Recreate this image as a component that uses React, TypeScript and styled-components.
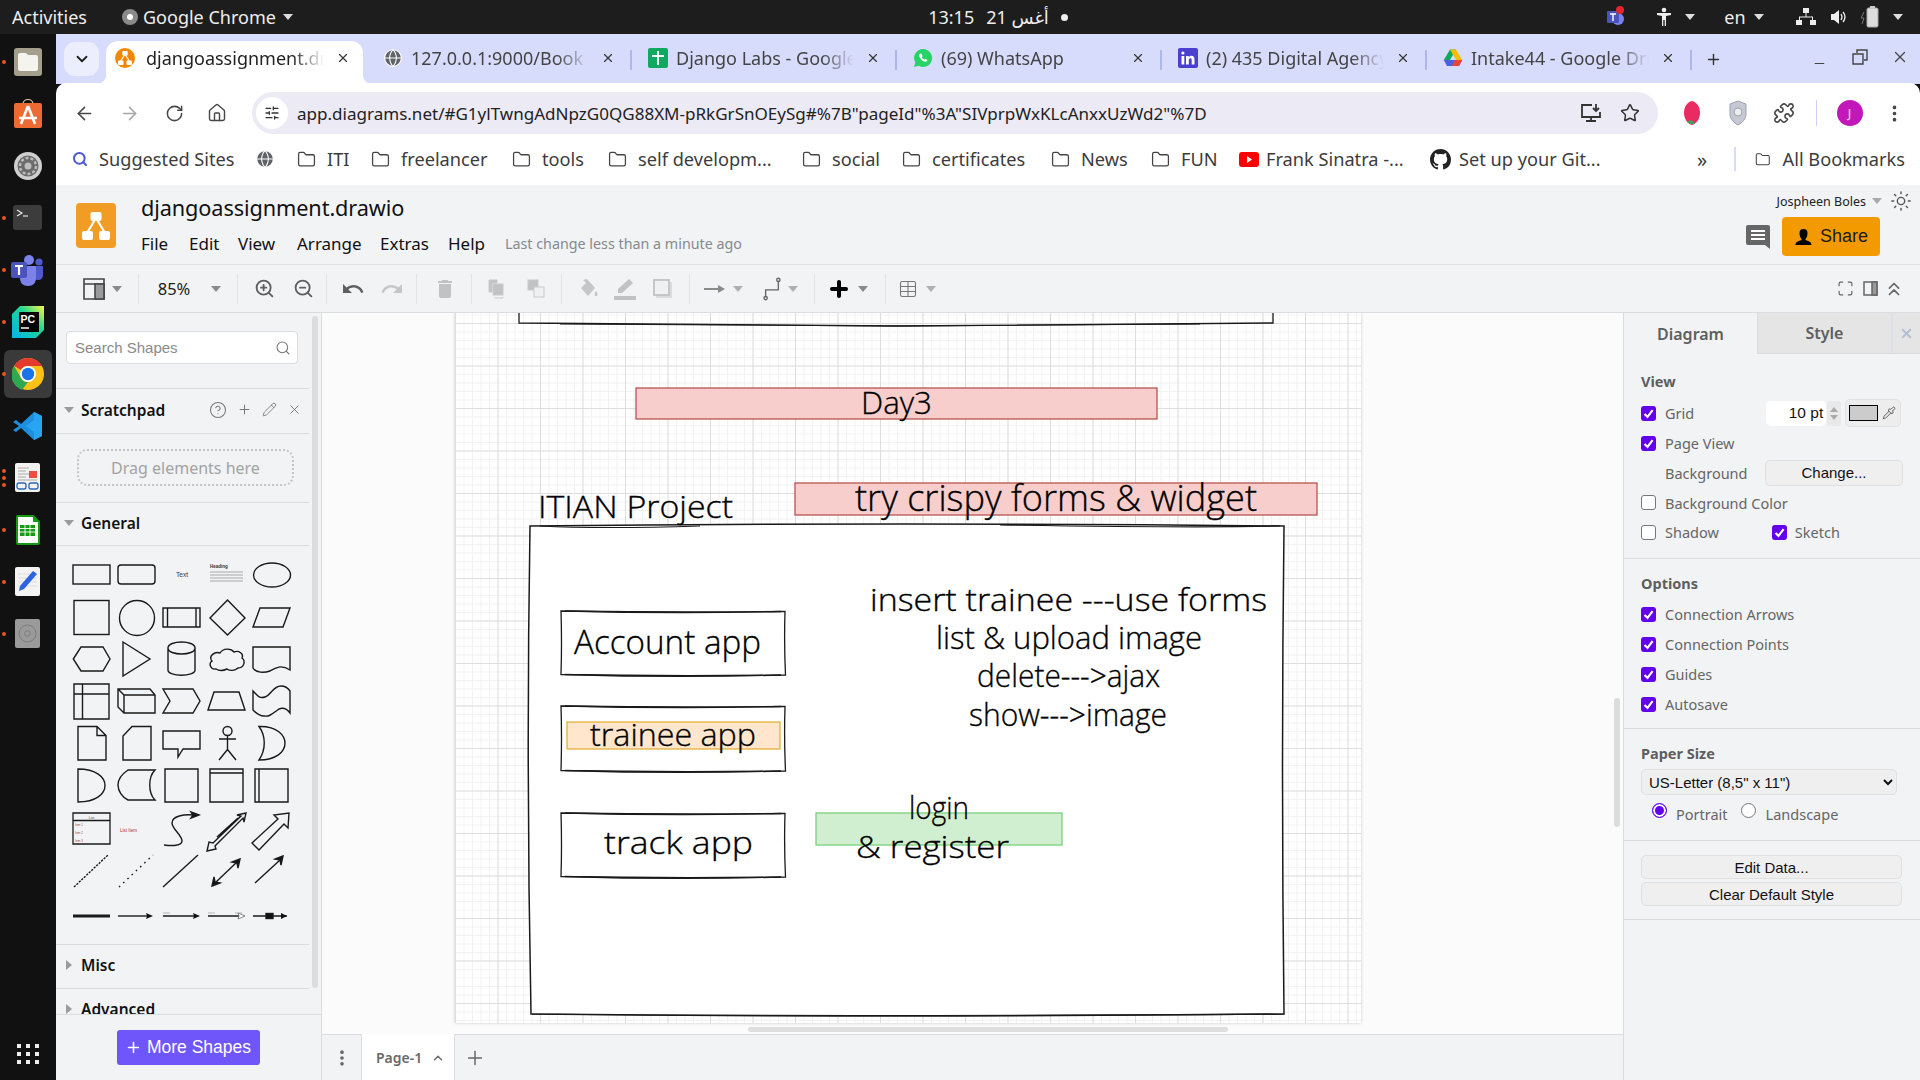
import React from "react";
import styled, { createGlobalStyle } from "styled-components";
import {
  ArrowLeft, ArrowRight, RotateCw, Home, ChevronDown, ChevronUp, Star, X, Plus, Minus, Search,
  Folder, MoreVertical, Pencil, Pipette, HelpCircle, ZoomIn, ZoomOut, Table, Sun,
  Maximize, ChevronsUp, SlidersHorizontal, Puzzle, Globe,
} from "lucide-react";

const UI = `"Noto Sans", "DejaVu Sans", sans-serif`;
const ARIAL = `"Liberation Sans", Arial, sans-serif`;

const Global = createGlobalStyle`
  html, body { margin: 0; padding: 0; background: #111; overflow: hidden; }
  * { box-sizing: border-box; }
  #root { width: 1920px; height: 1080px; }
`;

const Screen = styled.div`
  width: 1920px; height: 1080px; display: flex; flex-direction: column; overflow: hidden;
  font-family: ${UI}; color: #222;
`;

/* ---------- GNOME top bar ---------- */
const TopBar = styled.div`
  height: 34px; flex: none; background: #1d1d1d; color: #eee; display: grid;
  grid-template-columns: 1fr auto 1fr; align-items: center; font-size: 18px; padding: 0 12px;
`;
const TopLeft = styled.div`display: flex; align-items: center;`;
const TopCenter = styled.div`display: flex; align-items: center; gap: 12px; margin-left: 76px;`;
const TopRight = styled.div`display: flex; align-items: center; justify-content: flex-end;`;
const TopItem = styled.span<{ $w: number; $ml?: number }>`
  width: ${(p) => p.$w}px; margin-left: ${(p) => p.$ml ?? 0}px; flex: none; display: flex; align-items: center; justify-content: center;
`;
const TopLabel = styled.span<{ $ml: number }>`margin-left: ${(p) => p.$ml}px;`;
const Caret = styled.span<{ $c?: string; $s?: number; $ml?: number; $mr?: number; $up?: boolean }>`
  display: inline-block; width: 0; height: 0; flex: none;
  margin-left: ${(p) => p.$ml ?? 0}px; margin-right: ${(p) => p.$mr ?? 0}px;
  border-left: ${(p) => p.$s ?? 5}px solid transparent; border-right: ${(p) => p.$s ?? 5}px solid transparent;
  border-top: ${(p) => (p.$s ?? 5) + 1}px solid ${(p) => p.$c ?? "#ddd"};
  transform: ${(p) => (p.$up ? "rotate(180deg)" : "none")};
`;
const Dot = styled.span`width: 7px; height: 7px; border-radius: 50%; background: #eee; display: inline-block;`;

/* ---------- Dock ---------- */
const Body = styled.div`flex: 1; display: flex; min-height: 0;`;
const Dock = styled.div`
  width: 56px; flex: none; background: #111; display: flex; flex-direction: column; align-items: center;
  padding-top: 2px;
`;
const DockItem = styled.div<{ $active?: boolean }>`
  width: 48px; height: 48px; margin: 2px 0; border-radius: 6px; display: flex; align-items: center;
  justify-content: center; position: relative; background: ${(p) => (p.$active ? "#3a3a3a" : "transparent")};
`;
const DockDots = styled.div`
  position: absolute; left: -2px; top: 0; bottom: 0; display: flex; flex-direction: column; gap: 3px;
  justify-content: center; width: 4px;
`;
const DockDot = styled.span`width: 4px; height: 4px; border-radius: 50%; background: #e9541f; display: block;`;
const DockApps = styled.div`
  margin-top: auto; margin-bottom: 16px; display: grid; grid-template-columns: repeat(3, 4px); gap: 4px 5px;
`;
const AppsDot = styled.span`width: 4px; height: 4px; background: #eee; display: block;`;

/* ---------- Chrome ---------- */
const Main = styled.div`flex: 1; display: flex; flex-direction: column; min-width: 0;`;
const TabStrip = styled.div`
  height: 50px; flex: none; background: #d8dcfc; display: flex; align-items: flex-end; padding-left: 46px; position: relative;
`;
const TabSearch = styled.div`
  position: absolute; left: 8px; top: 8px; width: 35px; height: 34px; border-radius: 11px; background: #eceefd;
  display: flex; align-items: center; justify-content: center; color: #1f1f1f;
`;
const Tab = styled.div<{ $active?: boolean; $sep?: boolean }>`
  width: ${(p) => (p.$active ? 257 : 265)}px; margin: ${(p) => (p.$active ? "0 4px" : "0")};
  height: 43px; flex: none; display: flex; align-items: center; padding: 0 0 9px ${(p) => (p.$active ? 9 : 16)}px; position: relative;
  font-size: 18px; color: ${(p) => (p.$active ? "#222" : "#444")};
  background: ${(p) => (p.$active ? "#fff" : "transparent")};
  border-radius: ${(p) => (p.$active ? "12px 12px 0 0" : "0")};
  ${(p) =>
    p.$sep
      ? `&::after { content: ""; position: absolute; right: 0; top: 9px; height: 20px; width: 2px; background: #aeb6ef; }`
      : ""}
  ${(p) =>
    p.$active
      ? `&::before { content: ""; position: absolute; left: -10px; bottom: 0; width: 10px; height: 10px; background: radial-gradient(circle at 0 0, transparent 10px, #fff 10.5px); }
         &::after { content: ""; position: absolute; right: -10px; bottom: 0; width: 10px; height: 10px; background: radial-gradient(circle at 100% 0, transparent 10px, #fff 10.5px); }`
      : ""}
`;
const TabIcon = styled.span<{ $active?: boolean }>`width: 20px; height: 20px; flex: none; display: flex; margin-right: ${(p) => (p.$active ? 11 : 8)}px;`;
const TabTitle = styled.span`
  width: 178px; flex: none; white-space: nowrap; overflow: hidden;
  -webkit-mask-image: linear-gradient(90deg, #000 82%, transparent 100%);
  mask-image: linear-gradient(90deg, #000 82%, transparent 100%);
`;
const TabClose = styled.span`margin-left: 12px; display: flex; color: #333;`;
const NewTab = styled.span`margin: 0 0 16px 13px; display: flex; color: #333;`;
const WinBtns = styled.div`margin-left: auto; display: flex; align-items: center; gap: 23px; padding: 0 11px 13px 0; color: #444;`;
const WinMinus = styled(Minus)`margin: 14px 2px 0 0;`;

const NavBar = styled.div`
  height: 58px; flex: none; background: #fff; display: flex; align-items: flex-start; padding: 9px 0 0 0; position: relative;
  margin-top: -1px; border-radius: 10px 10px 0 0;
`;
const NavBtn = styled.span<{ $w: number; $c?: string; $ml?: number }>`
  width: ${(p) => p.$w}px; margin-left: ${(p) => p.$ml ?? 0}px; height: 42px; flex: none; display: flex; align-items: center; justify-content: center;
  color: ${(p) => p.$c ?? "#474747"};
`;
const Omnibox = styled.div`
  width: 1406px; height: 42px; flex: none; margin-left: 20px; background: #eceaf5; border-radius: 21px; display: flex; align-items: center; padding-left: 4px;
`;
const TuneCircle = styled.span`
  width: 32px; height: 32px; border-radius: 50%; background: #fff; display: flex; align-items: center; justify-content: center; color: #333; flex: none;
`;
const Url = styled.span`margin-left: 9px; font-size: 17.05px; color: #222; white-space: nowrap; flex: 1;`;
const OmniIcon = styled.span<{ $w: number }>`width: ${(p) => p.$w}px; flex: none; display: flex; justify-content: center; color: #333;`;
const NavSep = styled.span`width: 1px; height: 26px; margin: 8px 0 0 15px; background: #ccd0f4; flex: none;`;
const Avatar = styled.span`
  width: 26px; height: 26px; border-radius: 50%; background: #c217b9; color: #f3d0f0; display: flex; align-items: center;
  justify-content: center; font-size: 12px; font-weight: 500;
`;

const Bookmarks = styled.div`
  height: 44px; flex: none; background: #fff; display: flex; align-items: flex-start; padding: 4px 0 0 16px; font-size: 18.2px; color: #444;
`;
const Mark = styled.div<{ $w: number; $gap?: number }>`
  width: ${(p) => p.$w}px; flex: none; height: 28px; display: flex; align-items: center; gap: ${(p) => p.$gap ?? 11}px; white-space: nowrap; color: #3c3c3c;
`;
const Chevrons = styled.span`font-size: 20px;`;
const MarkSep = styled.span`width: 2px; height: 24px; background: #d8dcfc; margin: 2px 19px 0 17px; flex: none;`;

/* ---------- draw.io header ---------- */
const AppHead = styled.div`
  height: 80px; flex: none; background: #f1f3f5; border-bottom: 1px solid #dfe1e4; display: flex; padding: 18px 0 0 20px;
`;
const LogoBox = styled.span`width: 40px; height: 45px; background: #f19c25; border-radius: 4px; display: flex; align-items: center; justify-content: center; flex: none;`;
const TitleCol = styled.div`margin-left: 25px; display: flex; flex-direction: column; margin-top: -10px;`;
const DocTitle = styled.div`font-size: 21.7px; line-height: 30px; color: #111; letter-spacing: -0.1px;`;
const MenuRow = styled.div`display: flex; align-items: center; height: 30px; margin-top: 5px; font-size: 17px; color: #111;`;
const MenuItem = styled.span<{ $w: number }>`width: ${(p) => p.$w}px; flex: none;`;
const Status = styled.span`font-size: 14.3px; color: #868a8e; white-space: nowrap;`;
const HeadRight = styled.div`margin-left: auto; display: flex; flex-direction: column; align-items: flex-end; padding-right: 8px; margin-top: -18px;`;
const UserRow = styled.div`display: flex; align-items: center; gap: 6px; font-size: 12.5px; color: #222; height: 32px;`;
const UserSun = styled(Sun)`margin-left: 2px;`;
const ShareRow = styled.div`display: flex; align-items: center; gap: 11px; padding-right: 32px;`;
const ShareBtn = styled.div`
  width: 98px; height: 39px; background: #f39a00; border-radius: 4px; display: flex; align-items: center; justify-content: center; gap: 7px;
  font-family: ${ARIAL}; font-size: 18px; color: #1a1a1a;
`;

const ToolBar = styled.div`
  height: 48px; flex: none; background: #f1f3f5; border-bottom: 1px solid #dadce0; display: flex; align-items: center; padding-left: 22px;
`;
const Tool = styled.span<{ $w: number; $ml?: number; $c?: string }>`
  width: ${(p) => p.$w}px; margin-left: ${(p) => p.$ml ?? 0}px; height: 32px; flex: none; display: flex; align-items: center; justify-content: center;
  color: ${(p) => p.$c ?? "#5f5f5f"}; font-size: 16.5px;
`;
const ToolSep = styled.span<{ $ml?: number }>`width: 1px; height: 30px; background: #e1e3e6; margin-left: ${(p) => p.$ml ?? 0}px; flex: none;`;
const ToolRight = styled.div`margin-left: auto; display: flex; align-items: center; gap: 9px; padding-right: 15px; color: #666;`;
const Collapse = styled(ChevronsUp)`margin-left: -4px;`;

/* ---------- workspace ---------- */
const Work = styled.div`flex: 1; display: flex; min-height: 0;`;
const Sidebar = styled.div`
  width: 266px; flex: none; background: #f1f3f5; border-right: 1px solid #dadce0; display: flex; flex-direction: column; position: relative;
`;
const SideScroll = styled.div`flex: 1; min-height: 0; overflow: hidden; padding-right: 12px;`;
const SearchBox = styled.div`
  margin: 18px 0 24px 10px; width: 232px; height: 33px; background: #fff; border: 1px solid #dcdcdc; border-radius: 4px; display: flex; align-items: center;
  padding: 0 6px 0 8px; justify-content: space-between; color: #8a8a8a; font-family: ${ARIAL}; font-size: 15px;
`;
const Section = styled.div<{ $h: number }>`
  height: ${(p) => p.$h}px; border-top: 1px solid #dadce0; display: flex; align-items: center; padding: 0 0 3px 8px; gap: 4px;
  font-size: 15.5px; font-weight: 600; color: #111;
`;
const Tri = styled.span<{ $open?: boolean }>`
  width: 0; height: 0; flex: none; margin-right: 3px;
  ${(p) =>
    p.$open
      ? `border-left: 5px solid transparent; border-right: 5px solid transparent; border-top: 6px solid #9b9b9b;`
      : `border-top: 5px solid transparent; border-bottom: 5px solid transparent; border-left: 6px solid #9b9b9b; margin-left: 2px; margin-right: 5px;`}
`;
const SecIcons = styled.span`margin-left: auto; display: flex; align-items: center; gap: 10px; color: #777; padding-right: 7px;`;
const DragWrap = styled.div`border-top: 1px solid #dadce0; height: 69px; padding: 15px 0 0 21px;`;
const DragBox = styled.div`
  width: 217px; height: 37px; border: 2px dotted #c4c4c4; border-radius: 10px; display: flex; align-items: center; justify-content: center;
  color: #a3a3a3; font-size: 16px;
`;
const Palette = styled.div`
  border-top: 1px solid #dadce0; height: 399px; padding: 8px 0 0 14px; display: grid; grid-template-columns: repeat(5, 45px); grid-auto-rows: 42.6px;
`;
const ShapeSvg = styled.svg.attrs({ viewBox: "0 0 45 42", width: 45, height: 42 })`
  fill: none; stroke: #1a1a1a; stroke-width: 1.4; display: block;
  text { stroke: none; font-family: ${ARIAL}; }
`;
const More = styled.div`
  height: 66px; flex: none; border-top: 1px solid #dadce0; display: flex; justify-content: center; padding: 15px 0 0 0; background: #f1f3f5;
`;
const MoreBtn = styled.div`
  width: 143px; height: 35px; background: #6e56fb; border-radius: 3px; color: #fff; font-family: ${ARIAL}; font-size: 17.5px;
  display: flex; align-items: center; justify-content: center; gap: 5px; margin-right: 1px;
`;
const VScroll = styled.span<{ $x: number; $y: number; $h: number }>`
  position: absolute; left: ${(p) => p.$x}px; top: ${(p) => p.$y}px; width: 6px; height: ${(p) => p.$h}px; border-radius: 3px; background: #dcdcdc;
`;

const Center = styled.div`flex: 1; display: flex; flex-direction: column; min-width: 0; position: relative;`;
const Canvas = styled.div`height: 721px; flex: none; background: #fbfbfb; padding-left: 133px; overflow: hidden; position: relative;`;
const Sheet = styled.div`
  width: 906px; height: 710px; box-shadow: 0 0 3px #c9c9c9; background-color: #fff;
  background-image:
    linear-gradient(#dedede 1px, transparent 1px), linear-gradient(90deg, #dedede 1px, transparent 1px),
    linear-gradient(#f2f2f2 1px, transparent 1px), linear-gradient(90deg, #f2f2f2 1px, transparent 1px);
  background-size: 42.5px 42.5px, 42.5px 42.5px, 8.5px 8.5px, 8.5px 8.5px;
  background-position: 0 10px, 0 0, 0 1.5px, 0 0;
`;
const DiagramSvg = styled.svg.attrs({ viewBox: "455 313 906 710", width: 906, height: 710 })`
  display: block; fill: none; stroke: #1a1a1a; stroke-width: 1.3;
`;
const HandText = styled.text<{ $s: number }>`
  font-family: "Open Sans", "Noto Sans", sans-serif; font-weight: 300; fill: #000; stroke: #000; stroke-width: 0.35; font-size: ${(p) => p.$s}px;
`;
const HScroll = styled.span`position: absolute; left: 426px; bottom: 2px; width: 480px; height: 5px; border-radius: 3px; background: #dedede;`;
const Footer = styled.div`
  flex: 1; background: #f1f3f5; border-top: 1px solid #dadce0; display: flex; align-items: stretch;
`;
const FootBtn = styled.span<{ $w: number }>`width: ${(p) => p.$w}px; flex: none; display: flex; align-items: center; justify-content: center; color: #666;`;
const PageTab = styled.div`
  width: 94px; flex: none; background: #fff; border-left: 1px solid #dadce0; border-right: 1px solid #dadce0; display: flex; align-items: center; gap: 9px;
  padding-left: 14px; font-size: 14px; font-weight: 600; color: #6a6a6a; margin-top: -1px; height: 47px;
`;

/* ---------- format panel ---------- */
const Format = styled.div`
  width: 297px; flex: none; background: #f1f3f5; border-left: 1px solid #dadce0; display: flex; flex-direction: column; color: #666; font-size: 14.5px;
`;
const FormatTabs = styled.div`display: flex; height: 41px; flex: none;`;
const FormatTab = styled.div<{ $on?: boolean }>`
  width: ${(p) => (p.$on ? 133 : 134)}px; display: flex; align-items: center; justify-content: center; font-weight: 600; font-size: 16px; color: #5e5e5e;
  background: ${(p) => (p.$on ? "#f1f3f5" : "#e5e5e5")}; border-left: ${(p) => (p.$on ? "0" : "1px solid #dadce0")}; border-bottom: ${(p) => (p.$on ? "0" : "1px solid #dadce0")};
`;
const FormatClose = styled.div`flex: 1; background: #e5e5e5; border-left: 2px solid #dde0e6; border-bottom: 1px solid #dadce0; display: flex; align-items: center; justify-content: center; color: #b4bfd1;`;
const FormatSec = styled.div<{ $h: number; $pt?: number }>`
  height: ${(p) => p.$h}px; flex: none; padding: ${(p) => p.$pt ?? 0}px 17px 0 17px; border-bottom: 1px solid #dadce0;
`;
const SecTitle = styled.div<{ $mb?: number }>`font-weight: 700; font-size: 14.5px; color: #5e5e5e; height: 24px; line-height: 24px; margin-bottom: ${(p) => p.$mb ?? 0}px;`;
const Row = styled.div<{ $h?: number; $pl?: number }>`display: flex; align-items: center; height: ${(p) => p.$h ?? 30}px; padding-left: ${(p) => p.$pl ?? 0}px;`;
const ViewRow = styled(Row)`height: 29.75px;`;
const Check = styled.span<{ $on?: boolean; $ml?: number }>`
  width: 15px; height: 15px; border-radius: 3px; flex: none; display: flex; align-items: center; justify-content: center; margin-left: ${(p) => p.$ml ?? 0}px;
  background: ${(p) => (p.$on ? "#6200ee" : "#fff")}; border: ${(p) => (p.$on ? "none" : "1px solid #777")};
`;
const Label = styled.span<{ $ml?: number; $mt?: number }>`margin-left: ${(p) => p.$ml ?? 9}px; margin-top: ${(p) => p.$mt ?? 0}px; white-space: nowrap; color: #666;`;
const PtInput = styled.div`
  width: 60px; height: 25px; background: #fff; border-radius: 5px; margin-left: 72px; display: flex; align-items: center; justify-content: flex-end; padding-right: 3px;
  font-family: ${ARIAL}; font-size: 15.5px; color: #111;
`;
const Stepper = styled.div`width: 14px; height: 25px; margin-left: 1px; background: #e9e9e9; border-radius: 3px; display: flex; flex-direction: column; align-items: center; justify-content: center; gap: 3px;`;
const ColorBtn = styled.div`width: 56px; height: 28px; background: #ededed; border: 1px solid #e2e2e2; border-radius: 5px; margin-left: 4px; display: flex; align-items: center; padding-left: 3px; gap: 4px; color: #555;`;
const Swatch = styled.span`width: 29px; height: 16px; background: #cccccc; border: 1px solid #000; flex: none;`;
const NativeBtn = styled.div<{ $w: number; $h: number; $mt?: number }>`
  width: ${(p) => p.$w}px; height: ${(p) => p.$h}px; margin-top: ${(p) => p.$mt ?? 0}px; background: #efefef; border: 1px solid #e0e0e0; border-radius: 5px; display: flex; align-items: center;
  justify-content: center; font-family: ${ARIAL}; font-size: 15px; color: #111; flex: none;
`;
const ChangeBtn = styled(NativeBtn)`margin-left: auto;`;
const PaperSelect = styled.select`
  width: 256px; height: 26px; background: #efefef; border: 1px solid #e0e0e0; border-radius: 5px; font-family: ${ARIAL}; font-size: 15px; color: #111; padding-left: 3px; display: block; margin-top: 4px;
`;
const Radio = styled.span<{ $on?: boolean; $ml?: number }>`
  width: 15px; height: 15px; border-radius: 50%; flex: none; background: #fff; margin-left: ${(p) => p.$ml ?? 0}px; margin-top: -3px;
  border: 1px solid ${(p) => (p.$on ? "#6200ee" : "#777")};
  ${(p) => (p.$on ? "box-shadow: inset 0 0 0 2px #fff; background: #6200ee;" : "")}
`;

/* ---------- small drawings ---------- */
const Tick = () => (
  <svg width="11" height="11" viewBox="0 0 11 11" fill="none" stroke="#fff" strokeWidth="2.2"><path d="M1.5 6 L4.5 8.8 L9.6 2.2" /></svg>
);

const FolderIcon = () => <Folder size={19} strokeWidth={1.6} color="#444" />;

const DrawioGlyph = ({ s, bg }: { s: number; bg?: string }) => (
  <svg width={s} height={s} viewBox="0 0 40 40">
    {bg && <circle cx="20" cy="20" r="20" fill={bg} />}
    <path d="M20 12 L11 27 M20 12 L29 27" stroke="#fff" strokeWidth="2.2" />
    <rect x="14.5" y="6" width="11" height="9" rx="2" fill="#fff" />
    <rect x="6" y="25" width="11" height="9" rx="2" fill="#fff" />
    <rect x="23" y="25" width="11" height="9" rx="2" fill="#fff" />
  </svg>
);

const SheetsFav = () => (
  <svg width="20" height="20" viewBox="0 0 20 20"><rect width="20" height="20" rx="2" fill="#0fa960" /><path d="M10 3v14M4 8h12" stroke="#fff" strokeWidth="2" /></svg>
);
const WhatsFav = () => (
  <svg width="20" height="20" viewBox="0 0 20 20">
    <path d="M10 1a9 9 0 0 0-7.7 13.5L1 19l4.6-1.2A9 9 0 1 0 10 1z" fill="#25d366" />
    <path d="M6.8 5.6c-.9.9-1 2.6.6 4.8 1.6 2.2 3.7 3.6 5.4 3.3 1-.2 1.6-1 1.6-1.7l-2-1.2-.9.9c-1-.4-2.2-1.6-2.7-2.8l.8-.9-1-2.2z" fill="#fff" />
  </svg>
);
const LinkedInFav = () => (
  <svg width="20" height="20" viewBox="0 0 20 20">
    <rect width="20" height="20" rx="2" fill="#4b3fd0" />
    <rect x="3.5" y="8" width="2.8" height="8.5" fill="#fff" /><circle cx="4.9" cy="5" r="1.6" fill="#fff" />
    <path d="M8 8h2.7v1.3c.5-.9 1.5-1.5 2.7-1.5 2.2 0 3.1 1.4 3.1 3.6v5.1h-2.8v-4.6c0-1.1-.4-1.7-1.3-1.7s-1.6.7-1.6 1.8v4.5H8z" fill="#fff" />
  </svg>
);
const DriveFav = () => (
  <svg width="20" height="20" viewBox="0 0 20 20">
    <path d="M7 1.5h6L7 12H.8z" fill="#0fa960" />
    <path d="M13 1.5 19.2 12H13L7 1.5z" fill="#fbbc04" />
    <path d="M.8 12H19.2L16 18H4z" fill="#4c5fe0" />
    <path d="M12 12h7.2L16 18H9z" fill="#ea4335" />
  </svg>
);

const YouTubeIcon = () => (
  <svg width="20" height="15" viewBox="0 0 20 15"><rect width="20" height="15" rx="3" fill="#f00" /><path d="M8 4l5 3.5L8 11z" fill="#fff" /></svg>
);
const GithubIcon = () => (
  <svg width="21" height="21" viewBox="0 0 16 16" fill="#222">
    <path d="M8 0C3.58 0 0 3.58 0 8c0 3.54 2.29 6.53 5.47 7.59.4.07.55-.17.55-.38 0-.19-.01-.82-.01-1.49-2.01.37-2.53-.49-2.69-.94-.09-.23-.48-.94-.82-1.13-.28-.15-.68-.52-.01-.53.63-.01 1.08.58 1.23.82.72 1.21 1.87.87 2.33.66.07-.52.28-.87.51-1.07-1.78-.2-3.64-.89-3.64-3.95 0-.87.31-1.59.82-2.15-.08-.2-.36-1.02.08-2.12 0 0 .67-.21 2.2.82.64-.18 1.32-.27 2-.27s1.36.09 2 .27c1.53-1.04 2.2-.82 2.2-.82.44 1.1.16 1.92.08 2.12.51.56.82 1.27.82 2.15 0 3.07-1.87 3.75-3.65 3.95.29.25.54.73.54 1.48 0 1.07-.01 1.93-.01 2.2 0 .21.15.46.55.38A8 8 0 0 0 16 8c0-4.42-3.58-8-8-8z" />
  </svg>
);

const tabs = [
  { title: "djangoassignment.drawio", icon: <DrawioGlyph s={20} bg="#f08705" />, active: true },
  { title: "127.0.0.1:9000/Book", icon: <Globe size={20} color="#fff" fill="#5f6368" strokeWidth={1.3} /> },
  { title: "Django Labs - Google Sheets", icon: <SheetsFav /> },
  { title: "(69) WhatsApp", icon: <WhatsFav /> },
  { title: "(2) 435 Digital Agency", icon: <LinkedInFav /> },
  { title: "Intake44 - Google Drive", icon: <DriveFav /> },
];

const marks: { label: string; w: number; icon?: React.ReactNode; gap?: number }[] = [
  { label: "Suggested Sites", w: 183, icon: <Search size={16} strokeWidth={3} color="#4a5ad0" /> },
  { label: "", w: 42, icon: <Globe size={20} color="#fff" fill="#5f6368" strokeWidth={1.3} /> },
  { label: "ITI", w: 74 },
  { label: "freelancer", w: 141 },
  { label: "tools", w: 96 },
  { label: "self developm...", w: 194 },
  { label: "social", w: 100 },
  { label: "certificates", w: 149 },
  { label: "News", w: 100 },
  { label: "FUN", w: 88 },
  { label: "Frank Sinatra -...", w: 191, icon: <YouTubeIcon />, gap: 7 },
  { label: "Set up your Git...", w: 267, icon: <GithubIcon />, gap: 8 },
];

const dock: { key: string; dots: number; active?: boolean; icon: React.ReactNode }[] = [
  {
    key: "files", dots: 1,
    icon: (
      <svg width="30" height="30" viewBox="0 0 30 30">
        <rect x="1" y="1" width="28" height="28" rx="3" fill="#a49e8c" />
        <path d="M5 8a2 2 0 0 1 2-2h6l2 2h8a2 2 0 0 1 2 2v12a2 2 0 0 1-2 2H7a2 2 0 0 1-2-2z" fill="#f5f3ee" />
      </svg>
    ),
  },
  {
    key: "store", dots: 0,
    icon: (
      <svg width="30" height="32" viewBox="0 0 30 32">
        <path d="M10 6c0-6 10-6 10 0" fill="none" stroke="#e6c9a8" strokeWidth="1.2" />
        <rect x="1" y="5" width="28" height="25" rx="2" fill="#ee6a33" />
        <path d="M15 8 L8 26 M15 8 L22 26 M6 20h18" stroke="#fff" strokeWidth="2.6" fill="none" />
      </svg>
    ),
  },
  {
    key: "settings", dots: 0,
    icon: (
      <svg width="30" height="30" viewBox="0 0 30 30" fill="none">
        <circle cx="15" cy="15" r="14" fill="#cfcfcf" />
        <circle cx="15" cy="15" r="10.5" fill="#6b6b6b" />
        <circle cx="15" cy="15" r="8" stroke="#bdbdbd" strokeWidth="2.4" strokeDasharray="3 2" />
        <circle cx="15" cy="15" r="3.5" fill="#bdbdbd" />
      </svg>
    ),
  },
  {
    key: "term", dots: 1,
    icon: (
      <svg width="30" height="26" viewBox="0 0 30 26">
        <rect width="29" height="25" rx="3" fill="#3c3c3c" />
        <path d="M4 5l5 3-5 3" stroke="#eee" fill="none" strokeWidth="1.1" /><path d="M10 11h5" stroke="#eee" strokeWidth="1.1" />
      </svg>
    ),
  },
  {
    key: "teams", dots: 1,
    icon: (
      <svg width="34" height="32" viewBox="0 0 34 32">
        <circle cx="18" cy="6" r="5" fill="#7b83eb" /><circle cx="28" cy="8" r="3.6" fill="#5059c9" />
        <path d="M22 12h10v9c0 3-2 5-5 5s-5-2-5-5z" fill="#5059c9" />
        <path d="M9 12h16v12c0 5-3 8-8 8s-8-3-8-8z" fill="#7b83eb" />
        <rect x="0" y="8" width="16" height="16" rx="2" fill="#4b53bc" />
        <path d="M4 12h8M8 12v9" stroke="#fff" strokeWidth="2.2" />
      </svg>
    ),
  },
  {
    key: "pycharm", dots: 1,
    icon: (
      <svg width="32" height="32" viewBox="0 0 32 32">
        <defs>
          <linearGradient id="pc" x1="0" y1="1" x2="1" y2="0"><stop offset="0" stopColor="#00b4f0" /><stop offset=".6" stopColor="#20d790" /><stop offset="1" stopColor="#fcf84a" /></linearGradient>
        </defs>
        <path d="M8 0h24v24l-8 8H0V8z" fill="url(#pc)" />
        <rect x="7" y="6" width="20" height="20" fill="#000" />
        <path d="M9 22h8" stroke="#fff" strokeWidth="1.5" />
        <text x="8.5" y="17" fill="#fff" fontSize="10.5" fontWeight="700" fontFamily="Liberation Sans">PC</text>
      </svg>
    ),
  },
  {
    key: "chrome", dots: 1, active: true,
    icon: (
      <svg width="32" height="32" viewBox="0 0 32 32">
        <circle cx="16" cy="16" r="16" fill="#fbc116" />
        <path d="M16 0a16 16 0 0 1 13.9 8H16a8 8 0 0 0-7 4L2.1 8A16 16 0 0 1 16 0z" fill="#e33b2e" />
        <path d="M2.1 8 9 20a8 8 0 0 0 7 4l-6 8A16 16 0 0 1 2.1 8z" fill="#2fa84f" />
        <circle cx="16" cy="16" r="8" fill="#fff" /><circle cx="16" cy="16" r="6.2" fill="#1a73e8" />
      </svg>
    ),
  },
  {
    key: "code", dots: 0,
    icon: (
      <svg width="30" height="30" viewBox="0 0 30 30">
        <path d="M21 1 29 5v20l-8 4L8 17 3 21 0 19l6-4-6-4 3-2 5 4z" fill="#1c8fe0" />
        <path d="M21 1 29 5v20l-8 4V21l-8-6 8-6z" fill="#27a5f0" />
      </svg>
    ),
  },
  {
    key: "reader", dots: 3,
    icon: (
      <svg width="26" height="30" viewBox="0 0 26 30" fill="none">
        <rect width="25" height="29" rx="2" fill="#f2f2f0" />
        <path d="M3 5h11M3 8h8M3 11h11M3 14h8M3 17h19" stroke="#aaa" />
        <rect x="14" y="8" width="8" height="7" fill="#ef4a45" />
        <rect x="2" y="20" width="9" height="6" rx="2" stroke="#2a66b8" strokeWidth="1.3" /><rect x="14" y="20" width="9" height="6" rx="2" stroke="#2a66b8" strokeWidth="1.3" />
      </svg>
    ),
  },
  {
    key: "calc", dots: 1,
    icon: (
      <svg width="24" height="30" viewBox="0 0 24 30">
        <path d="M2 1h15l6 6v21a1 1 0 0 1-1 1H2a1 1 0 0 1-1-1V2a1 1 0 0 1 1-1z" fill="#fff" stroke="#159a14" strokeWidth="2" />
        <path d="M17 1l6 6h-6z" fill="#159a14" />
        <path d="M4 10h15v11H4z" fill="#159a14" />
        <path d="M4 13.5h15M4 17h15M9 10v11M14 10v11" stroke="#fff" strokeWidth="0.9" />
      </svg>
    ),
  },
  {
    key: "writer", dots: 1,
    icon: (
      <svg width="26" height="30" viewBox="0 0 26 30" fill="none">
        <rect width="25" height="29" rx="2" fill="#f3f3f3" />
        <path d="M3 7h19M3 11h19M3 15h19M3 19h19" stroke="#ddd" />
        <path d="M18 4l4 3-13 15-5 2 1-5z" fill="#2b63e0" />
      </svg>
    ),
  },
  {
    key: "disc", dots: 1,
    icon: (
      <svg width="26" height="30" viewBox="0 0 26 30" fill="none">
        <rect width="25" height="29" rx="2" fill="#9a9a9a" />
        <circle cx="12.5" cy="14.5" r="8.5" stroke="#7c7c7c" /><circle cx="12.5" cy="14.5" r="2.8" stroke="#7c7c7c" />
      </svg>
    ),
  },
];

const tinyLines = (x: number, y: number, n: number, w: number, gap: number, c = "#999") =>
  Array.from({ length: n }, (_, i) => <path key={i} d={`M${x} ${y + i * gap}h${w}`} stroke={c} strokeWidth="0.7" />);

const shapes: React.ReactNode[] = [
  <rect x="3" y="11" width="37" height="19" />,
  <rect x="3" y="11" width="37" height="19" rx="3" />,
  <text x="22" y="22.5" fontSize="6.5" textAnchor="middle" fill="#333">Text</text>,
  <>
    <text x="5" y="14" fontSize="4.5" fontWeight="700" fill="#333">Heading</text>
    {tinyLines(5, 18, 4, 33, 3, "#888")}
  </>,
  <ellipse cx="22" cy="21" rx="18.5" ry="12" />,

  <rect x="4" y="3.5" width="35" height="34" />,
  <circle cx="22" cy="21" r="17.5" />,
  <path d="M3 11h37v19H3zM7.5 11v19M36 11v19" />,
  <path d="M22.5 3 40 21 22.5 38 5 21z" />,
  <path d="M10 11h30l-7 19H3z" />,

  <path d="M3.3 20 11 8h22l7 12-7 12H11z" />,
  <path d="M8 3 35 20 8 37z" />,
  <path d="M8 9v22c0 7 27 7 27 0V9M8 9c0-8 27-8 27 0s-27 8-27 0z" />,
  <path d="M11 30c-5 1-8-5-4-8-4-5 3-10 8-8 3-5 11-5 14-1 5-2 10 2 8 6 4 3 2 10-4 10-3 3-8 3-11 1-4 2-8 2-11 0z" />,
  <path d="M3 8h37v23c-9-6-15-2-20 1-6 2-14 2-17-3z" />,

  <path d="M4 2h35v35H4zM4 12h35M12.5 2v35" />,
  <path d="M3 7h32l5 6v18H9l-6-6zM3 7l6 6h31M9 13v18" />,
  <path d="M3 7h30l7 12-7 12H3l7-12z" />,
  <path d="M3 28 9 10h25l6 18z" />,
  <path d="M3 9c4 4 6 8 12 6s8-11 16-11c5 0 7 2 9 5v22c-3-4-6-6-11-4-6 4-9 8-15 7-5 0-8-3-11-6z" />,

  <path d="M8 2.5h19l9 9V36H8zM27 2.5v9h9" />,
  <path d="M17 2.5h19V36H8V12z" />,
  <path d="M3 7h37v18H23l-5 8v-8H3z" />,
  <path d="M22.5 11.5v14M14 15h17M22.5 25.5 14 36M22.5 25.5 31 36M27 7a4.5 4.5 0 1 1-9 0 4.5 4.5 0 0 1 9 0z" />,
  <path d="M9 2.5c19-.5 26 9.500 26 16.500 0 9-9 17-26 17 7-10 7-24 0-33.500z" />,

  <path d="M8 2c18 0 27 8 27 16.500S26 35 8 35z" />,
  <path d="M13 3h27c-7 7-7 23 0 30H13C7 30 3 24 3 18S7 7 13 3z" />,
  <path d="M5 2h33v33H5z" />,
  <path d="M5 2h33v33H5zM5 6h33" />,
  <path d="M5 2h33v33H5zM9 2v33" />,

  <>
    <path d="M3 3h37v31H3zM3 10.500h37" strokeWidth="1.3" />
    <text x="21.500" y="8.500" fontSize="3.500" textAnchor="middle" fill="#555">List</text>
    <text x="5" y="16" fontSize="2.800" fill="#a33">Item 1</text>
    <text x="5" y="24" fontSize="2.800" fill="#a33">Item 2</text>
    <text x="5" y="32" fontSize="2.800" fill="#a33">Item 3</text>
  </>,
  <text x="5" y="22" fontSize="4.500" fill="#a33">List Item</text>,
  <>
    <path d="M4 35c8 1 18 1 18-4 0-6-10-12-10-18 0-7 12-9 22-8" />
    <path d="M39 5l-8-3 2 3-2 3z" fill="#111" />
  </>,
  <path d="M8 33 36 6l-4-1 9-2-2 9-1-4L10 36l1 3-9 2 2-9zM12 27 33 8" />,
  <path d="M2 33 28 9l-4-4 15-2-1 15-4-4L9 40z" />,

  <path d="M4 35 38 3" strokeDasharray="2.2 1.2" />,
  <path d="M4 35 38 3" strokeDasharray="1.6 4.2" />,
  <path d="M3 35 38 3" />,
  <>
    <path d="M10 31 32 10" />
    <path d="M35 7 27 10l5 1 1 5zM7 34l8-3-5-1-1-5z" fill="#111" />
  </>,
  <>
    <path d="M5 31 30 8" />
    <path d="M33 4l-8 3 5 1 1 5z" fill="#111" />
  </>,

  <path d="M3 21h37" strokeWidth="3" />,
  <>
    <path d="M3 21h32" /><path d="M38 21l-7-3 1 3-1 3z" fill="#111" stroke="none" />
  </>,
  <>
    <path d="M3 21h34" /><path d="M40 21l-7-3 1 3-1 3z" fill="#111" stroke="none" />
    {tinyLines(3, 18, 1, 7, 1)}
  </>,
  <>
    <path d="M3 21h34" /><path d="M40 21l-7-3 1 3-1 3z" fill="#fff" stroke="#555" strokeWidth="0.7" />
    {tinyLines(3, 18, 1, 7, 1)}{tinyLines(30, 18, 1, 7, 1)}
  </>,
  <>
    <path d="M3 21h34" /><path d="M37 21l-6-3v6z" fill="#111" stroke="none" />
    <rect x="16" y="18.500" width="7" height="5" fill="#111" />
  </>,
];

const Hand: React.FC<{ x: number; y: number; w: number; s?: number; children: string }> = ({ x, y, w, s = 34, children }) => (
  <HandText x={x} y={y} textLength={w} lengthAdjust="spacingAndGlyphs" $s={s}>
    {children}
  </HandText>
);

const sketchBox = (x1: number, y1: number, x2: number, y2: number, d = 3) => {
  const mx = (x1 + x2) / 2;
  return (
    <>
      <path d={`M${x1} ${y1}Q${mx} ${y1 + 1.5} ${x2} ${y1 + 0.5}Q${x2 - 1} ${(y1 + y2) / 2} ${x2 + 0.5} ${y2}Q${mx} ${y2 + 1.5} ${x1} ${y2 - 0.5}Q${x1 + 1} ${(y1 + y2) / 2} ${x1} ${y1}Z`} />
      <path d={`M${x1 + 4} ${y1}Q${mx} ${y1 + d} ${x2 - 4} ${y1 + 0.5}`} />
      <path d={`M${x1 + 4} ${y2 - 0.5}Q${mx} ${y2 + d} ${x2 - 4} ${y2}`} />
    </>
  );
};

const Diagram = () => (
  <DiagramSvg>
    <path d="M519 313V323L896 326 1273 323V313" />
    <path d="M560 324 900 326 1200 324" strokeWidth="1" />

    <rect x="636" y="388" width="521" height="31" fill="#f8cecc" stroke="#b85450" />
    <Hand x={861} y={414} w={71} s={31}>Day3</Hand>

    <path d="M530 526Q900 522 1284 526Q1281 770 1284 1014Q900 1018 531 1014Q526 770 530 526Z" fill="#fff" strokeWidth="1.5" />
    <path d="M540 526Q600 529 700 526 M1000 525Q1200 528 1280 526 M532 1014Q800 1017 1284 1014" strokeWidth="1.2" />

    <rect x="795" y="483" width="522" height="32" fill="#f8cecc" stroke="#b85450" />
    <Hand x={855} y={511} w={402} s={36}>try crispy forms &amp; widget</Hand>
    <Hand x={538} y={518} w={195} s={31}>ITIAN Project</Hand>

    {sketchBox(561, 611, 785, 675)}
    <Hand x={574} y={654} w={187} s={33}>Account app</Hand>

    <Hand x={870} y={611} w={397} s={32}>insert trainee ---use forms</Hand>
    <Hand x={936} y={649} w={266} s={32}>list &amp; upload image</Hand>
    <Hand x={977} y={687} w={183} s={32}>delete---&gt;ajax</Hand>
    <Hand x={969} y={726} w={198} s={32}>show---&gt;image</Hand>

    {sketchBox(561, 706, 785, 771)}
    <rect x="567" y="722" width="213" height="27" fill="#ffe6cc" stroke="#d79b00" strokeOpacity="0.75" />
    <Hand x={590} y={746} w={166} s={32}>trainee app</Hand>

    {sketchBox(561, 813, 785, 877)}
    <Hand x={604} y={854} w={149} s={32}>track app</Hand>

    <rect x="816" y="813" width="246" height="32" fill="#d0efd0" stroke="#7ccf7c" />
    <Hand x={909} y={819} w={60} s={32}>login</Hand>
    <Hand x={856} y={858} w={153} s={32}>&amp; register</Hand>
  </DiagramSvg>
);

const Opt: React.FC<{ on?: boolean; label: string }> = ({ on, label }) => (
  <Row>
    <Check $on={on}>{on && <Tick />}</Check>
    <Label>{label}</Label>
  </Row>
);
const ViewOpt: React.FC<{ on?: boolean; label: string }> = ({ on, label }) => (
  <ViewRow>
    <Check $on={on}>{on && <Tick />}</Check>
    <Label>{label}</Label>
  </ViewRow>
);

export default function App() {
  return (
    <Screen>
      <Global />
      <TopBar>
        <TopLeft>
          <span>Activities</span>
          <TopItem $w={16} $ml={35}>
            <svg width="16" height="16" viewBox="0 0 16 16"><circle cx="8" cy="8" r="8" fill="#8a8a8a" /><circle cx="8" cy="8" r="3" fill="#fff" /></svg>
          </TopItem>
          <TopLabel $ml={5}>Google Chrome</TopLabel>
          <Caret $ml={7} />
        </TopLeft>
        <TopCenter>
          <span>13:15</span>
          <bdi>أغس 21</bdi>
          <Dot />
        </TopCenter>
        <TopRight>
          <TopItem $w={30}>
            <svg width="20" height="22" viewBox="0 0 20 22">
              <circle cx="13" cy="13" r="6" fill="#7b83eb" /><rect x="2" y="5" width="12" height="12" rx="1" fill="#4b53bc" />
              <path d="M5 8h6M8 8v7" stroke="#fff" strokeWidth="1.4" /><circle cx="15" cy="4" r="4" fill="#e3262e" />
            </svg>
          </TopItem>
          <TopItem $w={30} $ml={19}>
            <svg width="16" height="20" viewBox="0 0 16 20" fill="#eee"><circle cx="8" cy="3" r="2.3" /><path d="M1 6h14v2l-5 1v10H8.700v-6H7.300v6H6V9L1 8z" /></svg>
          </TopItem>
          <Caret $ml={6} />
          <TopItem $w={34} $ml={23}>en</TopItem>
          <Caret $ml={2} />
          <TopItem $w={26} $ml={29}>
            <svg width="20" height="18" viewBox="0 0 20 18" fill="#eee"><rect x="7" y="0" width="6" height="5" /><rect x="0" y="12" width="6" height="5" /><rect x="14" y="12" width="6" height="5" /><path d="M9.500 5v3.500H3V12h1V9.500h12V12h1V8.500h-6.500V5z" /></svg>
          </TopItem>
          <TopItem $w={26} $ml={7}>
            <svg width="18" height="18" viewBox="0 0 18 18" fill="#eee"><path d="M1 6h3l5-4v14l-5-4H1z" /><path d="M11 6q2 3 0 6M13 4q4 5 0 10" stroke="#eee" fill="none" strokeWidth="1.3" /></svg>
          </TopItem>
          <TopItem $w={26} $ml={7}>
            <svg width="22" height="24" viewBox="0 0 22 24"><rect x="6" y="3" width="11" height="19" rx="1.500" fill="#ddd" stroke="#aaa" /><rect x="9" y="1" width="5" height="2" fill="#ccc" /><path d="M3 7 0 13h3l-2 6" stroke="#777" fill="none" /></svg>
          </TopItem>
          <Caret $ml={8} $mr={5} />
        </TopRight>
      </TopBar>

      <Body>
        <Dock>
          {dock.map((d) => (
            <DockItem key={d.key} $active={d.active}>
              <DockDots>
                {Array.from({ length: d.dots }, (_, i) => <DockDot key={i} />)}
              </DockDots>
              {d.icon}
            </DockItem>
          ))}
          <DockApps>
            {Array.from({ length: 9 }, (_, i) => <AppsDot key={i} />)}
          </DockApps>
        </Dock>

        <Main>
          <TabStrip>
            <TabSearch><ChevronDown size={18} strokeWidth={2.4} /></TabSearch>
            {tabs.map((t, i) => (
              <Tab key={t.title} $active={t.active} $sep={i > 0}>
                <TabIcon $active={t.active}>{t.icon}</TabIcon>
                <TabTitle>{t.title}</TabTitle>
                <TabClose><X size={14} strokeWidth={2} /></TabClose>
              </Tab>
            ))}
            <NewTab><Plus size={17} strokeWidth={2} /></NewTab>
            <WinBtns>
              <WinMinus size={15} strokeWidth={1.6} />
              <svg width="16" height="16" viewBox="0 0 16 16" fill="none" stroke="#444" strokeWidth="1.4"><path d="M5 4V1h10v10h-3M1 5h10v10H1z" /></svg>
              <X size={18} strokeWidth={1.6} />
            </WinBtns>
          </TabStrip>

          <NavBar>
            <NavBtn $w={56}><ArrowLeft size={21} strokeWidth={1.8} /></NavBtn>
            <NavBtn $w={34} $c="#a8a8a8"><ArrowRight size={21} strokeWidth={1.8} /></NavBtn>
            <NavBtn $w={56}><RotateCw size={19} strokeWidth={1.9} /></NavBtn>
            <NavBtn $w={30}><Home size={20} strokeWidth={1.7} /></NavBtn>
            <Omnibox>
              <TuneCircle><SlidersHorizontal size={16} strokeWidth={1.9} /></TuneCircle>
              <Url>app.diagrams.net/#G1ylTwngAdNpzG0QG88XM-pRkGrSnOEySg#%7B"pageId"%3A"SIVprpWxKLcAnxxUzWd2"%7D</Url>
              <OmniIcon $w={22}>
                <svg width="22" height="22" viewBox="0 0 22 22" fill="none" stroke="#333" strokeWidth="1.8"><path d="M12 3H2v12h18V10M6 19h10M11 15v4M16 2v7M13 6l3 3 3-3" /></svg>
              </OmniIcon>
              <OmniIcon $w={56}><Star size={20} strokeWidth={1.8} /></OmniIcon>
            </Omnibox>
            <NavBtn $w={34} $ml={17}>
              <svg width="20" height="26" viewBox="0 0 20 26"><path d="M10 1c5 1 8 6 8 12s-4 11-8 12C6 24 2 19 2 13S5 2 10 1z" fill="#ea2a63" /><path d="M5 22c2 2 6 3 8 1l-4-3z" fill="#3ba55d" /></svg>
            </NavBtn>
            <NavBtn $w={58} $c="#a9adb8">
              <svg width="20" height="26" viewBox="0 0 20 26" fill="#c6c8d4" stroke="#9da1ae"><path d="M10 1l8 3v10c0 5-4 9-8 11-4-2-8-6-8-11V4z" /><circle cx="10" cy="12" r="4" fill="#eee" /></svg>
            </NavBtn>
            <NavBtn $w={34}><Puzzle size={22} strokeWidth={1.8} /></NavBtn>
            <NavSep />
            <NavBtn $w={65}><Avatar>J</Avatar></NavBtn>
            <NavBtn $w={26} $ml={-1}><MoreVertical size={21} strokeWidth={2.2} /></NavBtn>
          </NavBar>

          <Bookmarks>
            {marks.map((m) => (
              <Mark key={m.label + m.w} $w={m.w} $gap={m.gap}>
                {m.icon ?? <FolderIcon />}
                {m.label && <span>{m.label}</span>}
              </Mark>
            ))}
            <Mark $w={20}><Chevrons>»</Chevrons></Mark>
            <MarkSep />
            <Mark $w={150} $gap={12}><FolderIcon /><span>All Bookmarks</span></Mark>
          </Bookmarks>

          <AppHead>
            <LogoBox><DrawioGlyph s={40} /></LogoBox>
            <TitleCol>
              <DocTitle>djangoassignment.drawio</DocTitle>
              <MenuRow>
                <MenuItem $w={48}>File</MenuItem>
                <MenuItem $w={49}>Edit</MenuItem>
                <MenuItem $w={59}>View</MenuItem>
                <MenuItem $w={83}>Arrange</MenuItem>
                <MenuItem $w={68}>Extras</MenuItem>
                <MenuItem $w={57}>Help</MenuItem>
                <Status>Last change less than a minute ago</Status>
              </MenuRow>
            </TitleCol>
            <HeadRight>
              <UserRow>
                <span>Jospheen Boles</span>
                <Caret $c="#aaa" />
                <UserSun size={22} strokeWidth={1.5} color="#555" />
              </UserRow>
              <ShareRow>
                <svg width="26" height="26" viewBox="0 0 26 26"><path d="M3 1h20a2 2 0 0 1 2 2v17l0 5-5-4H3a2 2 0 0 1-2-2V3a2 2 0 0 1 2-2z" fill="#666" /><path d="M6 7h14M6 11h14M6 15h14" stroke="#fff" strokeWidth="1.800" /></svg>
                <ShareBtn>
                  <svg width="19" height="18" viewBox="0 0 18 18"><path d="M5 5a4 4 0 0 1 8 0c0 3-1 5-2 6v1c3 1 6 2 6 5H1c0-3 3-4 6-5v-1C6 10 5 8 5 5z" fill="#000" /></svg>
                  Share
                </ShareBtn>
              </ShareRow>
            </HeadRight>
          </AppHead>

          <ToolBar>
            <Tool $w={32} $c="#444">
              <svg width="22" height="22" viewBox="0 0 22 22" fill="none" stroke="#444" strokeWidth="1.600"><path d="M1 1h20v20H1zM1 6h20" /><path d="M12 6h9v15h-9z" fill="#9a9a9a" /></svg>
            </Tool>
            <Tool $w={14}><Caret $c="#8a8a8a" /></Tool>
            <ToolSep $ml={14} />
            <Tool $w={70} $c="#222">85%</Tool>
            <Tool $w={14}><Caret $c="#8a8a8a" /></Tool>
            <ToolSep $ml={14} />
            <Tool $w={39} $ml={7}><ZoomIn size={21} strokeWidth={2.1} /></Tool>
            <Tool $w={39}><ZoomOut size={21} strokeWidth={2.1} /></Tool>
            <ToolSep $ml={3} />
            <Tool $w={37} $ml={7}>
              <svg width="24" height="24" viewBox="0 0 24 24" fill="#5f5f5f"><path d="M12.5 8c-2.65 0-5.05.99-6.9 2.6L2 7v9h9l-3.62-3.62c1.39-1.16 3.16-1.88 5.12-1.88 3.54 0 6.55 2.31 7.6 5.500l2.370-.78C21.080 11.030 17.150 8 12.500 8z" /></svg>
            </Tool>
            <Tool $w={37} $ml={2}>
              <svg width="24" height="24" viewBox="0 0 24 24" fill="#c4c6c8"><path d="M18.400 10.600C16.550 8.990 14.150 8 11.500 8c-4.650 0-8.580 3.030-9.960 7.220L3.900 16c1.050-3.190 4.050-5.500 7.600-5.500 1.950 0 3.730.72 5.120 1.880L13 16h9V7l-3.600 3.600z" /></svg>
            </Tool>
            <ToolSep $ml={6} />
            <Tool $w={52} $ml={2}>
              <svg width="24" height="24" viewBox="0 0 24 24" fill="#c0c2c4"><path d="M6 19c0 1.100.9 2 2 2h8c1.100 0 2-.9 2-2V7H6v12zM19 4h-3.500l-1-1h-5l-1 1H5v2h14V4z" /></svg>
            </Tool>
            <ToolSep />
            <Tool $w={38} $ml={7}>
              <svg width="22" height="22" viewBox="0 0 22 22" fill="#c0c2c4" stroke="#c8cacc"><path d="M2 2h8v3H5v9H2z" /><rect x="6" y="6" width="10" height="11" /><path d="M16 19v1h-9" fill="none" /></svg>
            </Tool>
            <Tool $w={38}>
              <svg width="22" height="22" viewBox="0 0 22 22" fill="#c0c2c4" stroke="#c8cacc"><rect x="3" y="2" width="10" height="10" /><rect x="9" y="9" width="10" height="10" fill="#eef0f2" /></svg>
            </Tool>
            <ToolSep $ml={6} />
            <Tool $w={37} $ml={8}>
              <svg width="22" height="22" viewBox="0 0 22 22" fill="#c4c6c8"><path d="M9 1 17 10l-7 8-7-8 5-5-3-3z" /><path d="M18 13c2 3 2 5 0 5s-2-2 0-5z" /></svg>
            </Tool>
            <Tool $w={36}>
              <svg width="24" height="24" viewBox="0 0 24 24" fill="#c0c2c4"><path d="M16 2l4 4L9 16H5v-4z" /><rect x="1" y="19" width="22" height="4" /></svg>
            </Tool>
            <Tool $w={39}>
              <svg width="22" height="22" viewBox="0 0 22 22" fill="#d9dbdd"><path d="M4 4h16v16H4z" /><rect x="2" y="2" width="15" height="15" fill="#eef0f2" stroke="#c0c2c4" strokeWidth="1.800" /></svg>
            </Tool>
            <ToolSep $ml={7} />
            <Tool $w={30} $ml={10}>
              <svg width="22" height="12" viewBox="0 0 22 12" fill="#8a8a8a"><path d="M0 5h15v2H0zM14 2l7 4-7 4z" /></svg>
            </Tool>
            <Tool $w={16}><Caret $c="#b0b0b0" /></Tool>
            <Tool $w={20} $ml={16}>
              <svg width="22" height="26" viewBox="0 0 22 26" fill="none" stroke="#666" strokeWidth="1.500"><path d="M4 22v-8h14V4" /><circle cx="4" cy="23" r="1.800" /><circle cx="18" cy="3" r="1.800" /></svg>
            </Tool>
            <Tool $w={22}><Caret $c="#b0b0b0" /></Tool>
            <ToolSep $ml={10} />
            <Tool $w={30} $ml={9} $c="#000"><Plus size={24} strokeWidth={4} /></Tool>
            <Tool $w={18}><Caret $c="#8a8a8a" /></Tool>
            <ToolSep $ml={13} />
            <Tool $w={24} $ml={10} $c="#777"><Table size={20} strokeWidth={1.3} /></Tool>
            <Tool $w={22}><Caret $c="#b0b0b0" /></Tool>
            <ToolRight>
              <Maximize size={17} strokeWidth={1.7} />
              <svg width="15" height="15" viewBox="0 0 15 15" fill="none" stroke="#666" strokeWidth="1.500"><path d="M1 1h13v13H1z" /><path d="M9 1h5v13H9z" fill="#999" /></svg>
              <Collapse size={22} strokeWidth={1.8} />
            </ToolRight>
          </ToolBar>

          <Work>
            <Sidebar>
              <SideScroll>
                <SearchBox>
                  <span>Search Shapes</span>
                  <Search size={16} strokeWidth={1.6} color="#777" />
                </SearchBox>
                <Section $h={45}>
                  <Tri $open />
                  Scratchpad
                  <SecIcons>
                    <HelpCircle size={18} strokeWidth={1.4} />
                    <Plus size={15} strokeWidth={1.6} />
                    <Pencil size={15} strokeWidth={1.4} />
                    <X size={15} strokeWidth={1.5} />
                  </SecIcons>
                </Section>
                <DragWrap><DragBox>Drag elements here</DragBox></DragWrap>
                <Section $h={43}><Tri $open />General</Section>
                <Palette>
                  {shapes.map((s, i) => <ShapeSvg key={i}>{s}</ShapeSvg>)}
                </Palette>
                <Section $h={44}><Tri />Misc</Section>
                <Section $h={44}><Tri />Advanced</Section>
              </SideScroll>
              <More>
                <MoreBtn><Plus size={17} strokeWidth={2.2} />More Shapes</MoreBtn>
              </More>
              <VScroll $x={256} $y={3} $h={672} />
            </Sidebar>

            <Center>
              <Canvas>
                <Sheet><Diagram /></Sheet>
                <HScroll />
                <VScroll $x={1292} $y={385} $h={129} />
              </Canvas>
              <Footer>
                <FootBtn $w={39}><MoreVertical size={20} strokeWidth={2.4} /></FootBtn>
                <PageTab>Page-1<ChevronUp size={14} strokeWidth={2.5} /></PageTab>
                <FootBtn $w={39}><Plus size={22} strokeWidth={1.6} /></FootBtn>
              </Footer>
            </Center>

            <Format>
              <FormatTabs>
                <FormatTab $on>Diagram</FormatTab>
                <FormatTab>Style</FormatTab>
                <FormatClose><X size={15} strokeWidth={3} /></FormatClose>
              </FormatTabs>
              <FormatSec $h={205} $pt={15}>
                <SecTitle $mb={5.5}>View</SecTitle>
                <ViewRow>
                  <Check $on><Tick /></Check>
                  <Label>Grid</Label>
                  <PtInput>10 pt</PtInput>
                  <Stepper><Caret $c="#aaa" $s={4} $up /><Caret $c="#aaa" $s={4} /></Stepper>
                  <ColorBtn><Swatch /><Pipette size={14} strokeWidth={1.6} /></ColorBtn>
                </ViewRow>
                <ViewOpt on label="Page View" />
                <ViewRow>
                  <Label $ml={24}>Background</Label>
                  <ChangeBtn $w={138} $h={26}>Change...</ChangeBtn>
                </ViewRow>
                <ViewOpt label="Background Color" />
                <ViewRow>
                  <Check />
                  <Label>Shadow</Label>
                  <Check $on $ml={53}><Tick /></Check>
                  <Label $ml={8}>Sketch</Label>
                </ViewRow>
              </FormatSec>
              <FormatSec $h={170} $pt={12}>
                <SecTitle $mb={4}>Options</SecTitle>
                <Opt on label="Connection Arrows" />
                <Opt on label="Connection Points" />
                <Opt on label="Guides" />
                <Opt on label="Autosave" />
              </FormatSec>
              <FormatSec $h={112} $pt={12}>
                <SecTitle>Paper Size</SecTitle>
                <PaperSelect defaultValue="letter">
                  <option value="letter">US-Letter (8,5" x 11")</option>
                </PaperSelect>
                <Row $h={34} $pl={11}>
                  <Radio $on />
                  <Label $ml={9} $mt={3}>Portrait</Label>
                  <Radio $ml={13} />
                  <Label $ml={10} $mt={3}>Landscape</Label>
                </Row>
              </FormatSec>
              <FormatSec $h={79} $pt={14}>
                <NativeBtn $w={261} $h={24}>Edit Data...</NativeBtn>
                <NativeBtn $w={261} $h={24} $mt={3}>Clear Default Style</NativeBtn>
              </FormatSec>
            </Format>
          </Work>
        </Main>
      </Body>
    </Screen>
  );
}
